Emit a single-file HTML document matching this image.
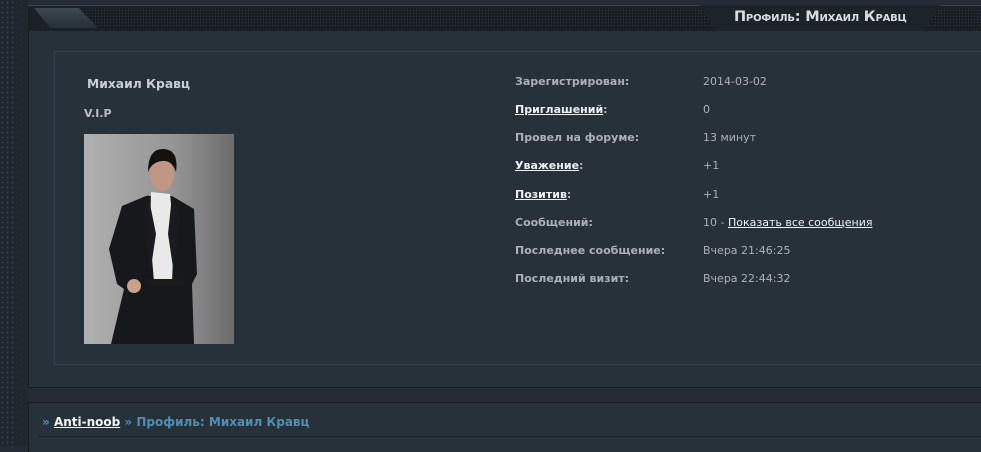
<!DOCTYPE html>
<html><head><meta charset="utf-8"><style>
*{margin:0;padding:0;box-sizing:border-box}
body{width:981px;height:446px;overflow:hidden;background:#242d36;font-family:"DejaVu Sans",Verdana,sans-serif;font-size:11px;color:#b8bec4;position:relative}
.strip{position:absolute;left:0;top:0;width:17px;height:446px;background-color:#1e262e;background-image:radial-gradient(#34404b 0.8px,transparent 1px);background-size:5px 5px}
.strip2{position:absolute;left:17px;top:0;width:11px;height:446px;background:#1f272f}
.hdr{position:absolute;left:28px;top:5px;width:953px;height:26px;background:#1a2026;border-top:1px solid #3a4550}
.hdr .dots{position:absolute;left:45px;top:3px;right:0;height:19px;background-color:#161b20;background-image:radial-gradient(#2c353e 0.7px,transparent 0.9px);background-size:3px 3px}
.tab{position:absolute;left:34px;top:8px;width:64px;height:20px;background:linear-gradient(#3c4853,#262f38);clip-path:polygon(0 0,70% 0,100% 100%,25% 100%)}
.title{position:absolute;left:700px;top:5px;width:240px;height:26px;background:#1c2329;clip-path:polygon(0 0,100% 0,94% 100%,6% 100%)}
.title span{position:absolute;left:34px;top:4px;color:#d8dde2;font-weight:bold;font-size:14.5px;font-variant:small-caps;letter-spacing:-0.2px;white-space:nowrap}
.panel{position:absolute;left:28px;top:30px;width:960px;height:358px;background:#27313a;border-left:1px solid #161c21;border-bottom:1px solid #161c21;border-top:1px solid #161c21}
.inner{position:absolute;left:54px;top:51px;width:940px;height:314px;border:1px solid #35414c}
.name{position:absolute;left:87px;top:77px;font-weight:bold;font-size:12.3px;color:#c9ced3}
.vip{position:absolute;left:84px;top:107px;font-weight:bold;color:#b8bec4}
.photo{position:absolute;left:84px;top:134px;width:150px;height:210px}
.lbl{position:absolute;left:515px;font-weight:bold;color:#aab1b8}
.val{position:absolute;left:703px;color:#aab1b8}
a{color:#eef1f4;text-decoration:underline}
.bc{position:absolute;left:28px;top:402px;width:960px;height:50px;background:#27313a;border-left:1px solid #161c21;border-top:1px solid #161c21}
.bc div{position:absolute;left:13px;top:12px;font-weight:bold;font-size:12px;color:#4f8fb5}
.bc a{color:#f2f4f6}
.bcl{position:absolute;left:38px;top:436px;width:943px;height:1px;background:#1a2127}
</style></head><body>
<div class="strip"></div><div class="strip2"></div>
<div class="panel"></div>
<div class="hdr"><div class="dots"></div></div>
<div class="tab"></div>
<div class="title"><span>Профиль: Михаил Кравц</span></div>
<div class="inner"></div>
<div class="name">Михаил Кравц</div>
<div class="vip">V.I.P</div>
<svg class="photo" viewBox="0 0 150 210">
<defs><linearGradient id="g" x1="0" x2="1"><stop offset="0" stop-color="#b0b0b0"/><stop offset="0.6" stop-color="#959595"/><stop offset="1" stop-color="#6c6c6c"/></linearGradient></defs>
<rect width="150" height="210" fill="url(#g)"/>
<path d="M62 62 L38 72 L25 115 L33 150 L40 155 L27 210 L110 210 L108 150 L113 140 L110 75 L88 62 Z" fill="#17181c"/>
<path d="M67 58 L86 60 L90 100 L88 148 L70 148 L66 100 Z" fill="#e9e9e9"/>
<path d="M64 60 L72 100 L66 140 L60 80 Z" fill="#1a1b1f"/>
<path d="M88 62 L84 100 L90 140 L96 80 Z" fill="#1a1b1f"/>
<rect x="64" y="145" width="36" height="7" fill="#1b1b1b"/>
<ellipse cx="78" cy="40" rx="12" ry="17" fill="#c19784"/>
<path d="M64 38 Q64 14 80 15 Q95 16 92 38 Q88 26 78 27 Q68 28 64 38Z" fill="#14110f"/>
<ellipse cx="50" cy="152" rx="7" ry="7" fill="#c9a08a"/>
</svg>
<div class="lbl" style="top:75px">Зарегистрирован:</div><div class="val" style="top:75px">2014-03-02</div>
<div class="lbl" style="top:103px"><a>Приглашений</a>:</div><div class="val" style="top:103px">0</div>
<div class="lbl" style="top:131px">Провел на форуме:</div><div class="val" style="top:131px">13 минут</div>
<div class="lbl" style="top:159px"><a>Уважение</a>:</div><div class="val" style="top:159px">+1</div>
<div class="lbl" style="top:188px"><a>Позитив</a>:</div><div class="val" style="top:188px">+1</div>
<div class="lbl" style="top:216px">Сообщений:</div><div class="val" style="top:216px">10 - <a style="font-weight:normal">Показать все сообщения</a></div>
<div class="lbl" style="top:244px">Последнее сообщение:</div><div class="val" style="top:244px">Вчера 21:46:25</div>
<div class="lbl" style="top:272px">Последний визит:</div><div class="val" style="top:272px">Вчера 22:44:32</div>
<div class="bc"><div>» <a>Anti-noob</a> » Профиль: Михаил Кравц</div></div>
<div class="bcl"></div>
</body></html>
